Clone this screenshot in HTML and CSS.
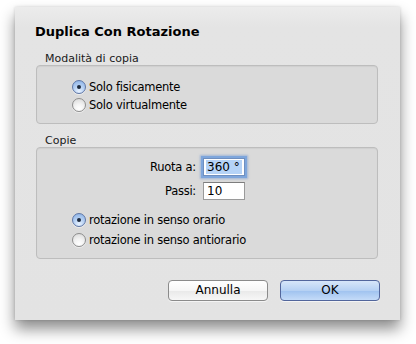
FILE: index.html
```html
<!DOCTYPE html>
<html lang="it">
<head>
<meta charset="utf-8">
<link rel="stylesheet" href="styles.css">
</head>
<body>
<div class="window">
  <div class="title">Duplica Con Rotazione</div>

  <div class="group-label">Modalità di copia</div>
  <div class="group g1">
    <label class="radio-row"><span class="radio on"></span>Solo fisicamente</label>
    <label class="radio-row"><span class="radio"></span>Solo virtualmente</label>
  </div>

  <div class="group-label">Copie</div>
  <div class="group g2">
    <div class="fields">
      <span class="flabel">Ruota a:</span>
      <span class="field focus"><span class="sel">360 °</span></span>
      <span class="flabel">Passi:</span>
      <span class="field">10</span>
    </div>
    <label class="radio-row"><span class="radio on"></span>rotazione in senso orario</label>
    <label class="radio-row"><span class="radio"></span>rotazione in senso antiorario</label>
  </div>

  <div class="buttons">
    <span class="btn">Annulla</span>
    <span class="btn default">OK</span>
  </div>
</div>
</body>
</html>
```
FILE: styles.css
```css
html, body {
  margin: 0;
  padding: 0;
  background: #ffffff;
}
body {
  width: 416px;
  height: 344px;
  overflow: hidden;
  font-family: "DejaVu Sans", "Noto Sans", sans-serif;
  font-size: 11.5px;
  letter-spacing: -0.25px;
  color: #000;
}
.window {
  box-sizing: border-box;
  margin: 7px 0 0 15px;
  width: 385px;
  height: 313px;
  background: linear-gradient(#ececec, #e4e4e4 20px, #e3e3e3);
  box-shadow: 0 9px 14px rgba(0, 0, 0, 0.45), 0 0 3px rgba(0, 0, 0, 0.15);
  padding: 17px 22px 0 21px;
  display: flex;
  flex-direction: column;
}
.title {
  font-weight: bold;
  font-size: 13px;
  letter-spacing: 0;
  line-height: 16px;
  margin-left: -1px;
  height: 16px;
}
.group-label {
  font-size: 11px;
  letter-spacing: 0;
  line-height: 13px;
  color: #1a1a1a;
  padding-left: 9px;
  margin-top: 12px;
  height: 13px;
}
.g1 + .group-label { margin-top: 10px; }
.group {
  border: 1px solid #bdbdbd;
  border-radius: 4px;
  background: #dadada;
  box-shadow: inset 0 1px 1px rgba(0,0,0,0.05);
  display: flex;
  flex-direction: column;
}
.g1 {
  height: 59px;
  box-sizing: border-box;
  padding: 14px 0 0 35px;
  gap: 4px;
}
.g2 {
  height: 112px;
  box-sizing: border-box;
  padding: 10px 0 0 35px;
}
.radio-row {
  display: flex;
  align-items: center;
  height: 14px;
  line-height: 14px;
  gap: 3px;
}
.g2 .radio-row + .radio-row { margin-top: 6px; }
.radio {
  box-sizing: border-box;
  width: 14px;
  height: 14px;
  border-radius: 50%;
  border: 1px solid #8d8d8d;
  background: radial-gradient(circle at 50% 80%, #ffffff 0, #f3f3f3 40%, #d6d6d6 100%);
  box-shadow: 0 1px 0 rgba(255,255,255,0.5);
  position: relative;
  flex: none;
}
.radio.on {
  border-color: #5e76a6;
  background: radial-gradient(circle at 50% 85%, #e8f2ff 0, #b7d1f3 45%, #86aee4 100%);
}
.radio.on::after {
  content: "";
  position: absolute;
  left: 4px;
  top: 4px;
  width: 4px;
  height: 4px;
  border-radius: 50%;
  background: #1d2a3d;
}
.fields {
  display: grid;
  grid-template-columns: 124px 42px;
  column-gap: 7px;
  row-gap: 6px;
  margin-bottom: 13px;
  align-items: center;
}
.flabel {
  text-align: right;
}
.field {
  box-sizing: border-box;
  height: 18px;
  border: 1px solid #9a9a9a;
  border-top-color: #7d7d7d;
  background: #fff;
  padding: 0 0 0 3px;
  line-height: 16px;
  font-size: 12px;
  letter-spacing: 0;
}
.field.focus {
  box-shadow: 0 0 0 2px #7ea6dc, 0 0 2px 3px rgba(110,150,210,0.55);
  border-color: #6f8fbf;
}
.sel {
  background: #b5d3f7;
  padding: 0 2px 0 1px;
  margin-left: -1px;
}
.buttons {
  margin-top: auto;
  margin-bottom: 19px;
  display: flex;
  justify-content: flex-end;
  gap: 12px;
  margin-right: -2px;
}
.btn {
  box-sizing: border-box;
  width: 100px;
  height: 21px;
  border: 1px solid #8b8b8b;
  border-radius: 4px;
  background: linear-gradient(#ffffff, #f6f6f6 50%, #e9e9e9 51%, #f7f7f7);
  text-align: center;
  line-height: 19px;
  font-size: 12px;
  letter-spacing: 0;
  box-shadow: 0 1px 0 rgba(255,255,255,0.6);
}
.btn.default {
  border-color: #52669c;
  background: linear-gradient(#d7e6f9, #b6d1f3 50%, #9fc2ef 51%, #c4dbf8);
}
```
